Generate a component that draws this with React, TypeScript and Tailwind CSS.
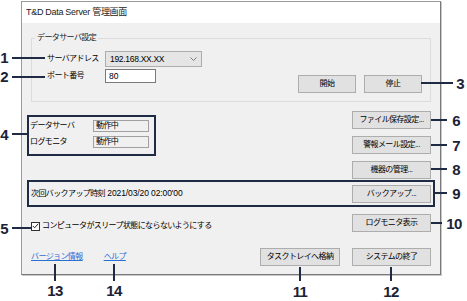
import React from "react";
import clsx from "clsx";

function Btn({ children, className }: { children: React.ReactNode; className?: string }) {
  return (
    <button
      className={clsx(
        "flex h-[18px] items-center justify-center border border-[#adadad] bg-[#e1e1e1] text-[8px] leading-none tracking-[-0.6px] text-black",
        className
      )}
    >
      {children}
    </button>
  );
}

function Num({ n, className }: { n: string; className: string }) {
  return (
    <span
      className={clsx(
        "absolute -translate-x-1/2 -translate-y-1/2 text-[15px] leading-none font-bold text-[#1b2236]",
        className
      )}
    >
      {n}
    </span>
  );
}

function HLine({ className }: { className: string }) {
  return <div className={clsx("absolute h-[2px] bg-[#1f2a44]", className)} />;
}

function VLine({ className }: { className: string }) {
  return <div className={clsx("absolute w-[2px] bg-[#1f2a44]", className)} />;
}

function StatusRow({ label }: { label: string }) {
  return (
    <div className="flex items-center">
      <span className="w-[63px]">{label}</span>
      <div className="flex h-[12px] w-[56px] items-center border border-[#a0a0a0] bg-[#f0f0f0] pl-[2px]">
        動作中
      </div>
    </div>
  );
}

export default function App() {
  return (
    <div className="relative h-[301px] w-[467px] overflow-hidden bg-white pt-[1px] pl-[21px] text-[8px] tracking-[-0.6px] text-black [font-family:'Liberation_Sans','Noto_Sans_CJK_JP',sans-serif]">
      {/* window */}
      <div className="flex h-[274px] w-[420px] flex-col border border-[#9a9a9a] border-r-[#7a7a7a] border-b-[#7a7a7a] shadow-[1px_1px_0_#c8c8c8]">
        <div className="flex h-[21px] items-center bg-white pl-[4px] text-[9px] tracking-[-0.3px] text-[#222]">
          T&amp;D Data Server 管理画面
        </div>
        <div className="flex flex-1 flex-col bg-[#f0f0f0] px-[9px] pt-[15px]">
          {/* group box */}
          <div className="relative flex h-[64px] justify-between border border-[#dcdcdc] pt-[12px] pr-[8px] pb-[8px] pl-[15px]">
            <span className="absolute -top-[7px] left-[3px] bg-[#f0f0f0] px-[2px] leading-[12px] text-[#222]">
              データサーバ設定
            </span>
            <div className="flex flex-col gap-[2px]">
              <div className="flex items-center">
                <span className="w-[58px]">サーバアドレス</span>
                <div className="flex h-[16px] w-[97px] items-center justify-between border border-[#adadad] bg-[#e5e5e5] pr-[4px] pl-[4px]">
                  <span className="text-[8.5px] tracking-[-0.3px]">192.168.XX.XX</span>
                  <svg width="7" height="4" viewBox="0 0 7 4" fill="none">
                    <path d="M0.5 0.5 L3.5 3.5 L6.5 0.5" stroke="#707070" strokeWidth="0.9" />
                  </svg>
                </div>
              </div>
              <div className="flex items-center">
                <span className="w-[58px]">ポート番号</span>
                <div className="flex h-[14px] w-[51px] items-center border border-[#7a7a7a] bg-white pl-[3px] text-[8.5px] tracking-normal">
                  80
                </div>
              </div>
            </div>
            <div className="flex items-end gap-[8px]">
              <Btn className="w-[58px]">開始</Btn>
              <Btn className="w-[58px]">停止</Btn>
            </div>
          </div>

          {/* status + right buttons */}
          <div className="mt-[9px] flex justify-between">
            <div className="mt-[4px] -ml-[4px] flex h-[41px] w-[129px] flex-col gap-[4px] border-2 border-[#1f2a44] pt-[3px] pl-[1px]">
              <StatusRow label="データサーバ" />
              <StatusRow label="ログモニタ" />
            </div>
            <div className="flex w-[79px] flex-col gap-[7px]">
              <Btn className="w-full">ファイル保存設定...</Btn>
              <Btn className="w-full">警報メール設定...</Btn>
              <Btn className="w-full">機器の管理...</Btn>
            </div>
          </div>

          {/* backup row */}
          <div className="mt-[1px] -mr-[4px] -ml-[4px] flex h-[27px] items-center justify-between border-2 border-[#1f2a44] pr-[2px] pl-[2px]">
            <span>
              次回バックアップ時刻
              <span className="text-[8.5px] tracking-[-0.1px]"> 2021/03/20 02:00'00</span>
            </span>
            <Btn className="h-[17px] w-[79px]">バックアップ...</Btn>
          </div>

          {/* checkbox row */}
          <div className="mt-[7px] flex items-end justify-between">
            <div className="flex items-center gap-[2px]">
              <div className="flex h-[9px] w-[9px] items-center justify-center border border-[#333] bg-white">
                <svg width="7" height="6" viewBox="0 0 7 6" fill="none">
                  <path d="M0.8 3 L2.6 4.8 L6.2 0.8" stroke="#222" strokeWidth="1" />
                </svg>
              </div>
              <span>コンピュータがスリープ状態にならないようにする</span>
            </div>
            <Btn className="w-[79px]">ログモニタ表示</Btn>
          </div>

          {/* bottom row */}
          <div className="mt-[16px] flex items-center">
            <a className="text-[#2a6fd6] underline">バージョン情報</a>
            <a className="ml-[21px] text-[#2a6fd6] underline">ヘルプ</a>
            <div className="ml-auto flex gap-[12px]">
              <Btn className="w-[80px]">タスクトレイへ格納</Btn>
              <Btn className="w-[79px]">システムの終了</Btn>
            </div>
          </div>
        </div>
      </div>

      {/* annotations */}
      <HLine className="top-[57px] left-[12px] w-[33px]" />
      <Num n="1" className="top-[57px] left-[4px]" />
      <HLine className="top-[76px] left-[12px] w-[33px]" />
      <Num n="2" className="top-[76px] left-[4px]" />
      <HLine className="top-[82px] left-[421px] w-[32px]" />
      <Num n="3" className="top-[83px] left-[460px]" />
      <HLine className="top-[133px] left-[12px] w-[15px]" />
      <Num n="4" className="top-[134px] left-[4px]" />
      <HLine className="top-[227px] left-[12px] w-[19px]" />
      <Num n="5" className="top-[228px] left-[4px]" />
      <HLine className="top-[119px] left-[431px] w-[16px]" />
      <Num n="6" className="top-[120px] left-[456px]" />
      <HLine className="top-[144px] left-[431px] w-[16px]" />
      <Num n="7" className="top-[145px] left-[456px]" />
      <HLine className="top-[168px] left-[431px] w-[16px]" />
      <Num n="8" className="top-[169px] left-[456px]" />
      <HLine className="top-[192px] left-[435px] w-[12px]" />
      <Num n="9" className="top-[193px] left-[456px]" />
      <HLine className="top-[222px] left-[431px] w-[11px]" />
      <Num n="10" className="top-[223px] left-[454px]" />
      <VLine className="top-[267px] left-[299px] h-[14px]" />
      <Num n="11" className="top-[291px] left-[300px]" />
      <VLine className="top-[267px] left-[390px] h-[14px]" />
      <Num n="12" className="top-[291px] left-[391px]" />
      <VLine className="top-[264px] left-[54px] h-[17px]" />
      <Num n="13" className="top-[290px] left-[55px]" />
      <VLine className="top-[264px] left-[113px] h-[17px]" />
      <Num n="14" className="top-[290px] left-[114px]" />
    </div>
  );
}
